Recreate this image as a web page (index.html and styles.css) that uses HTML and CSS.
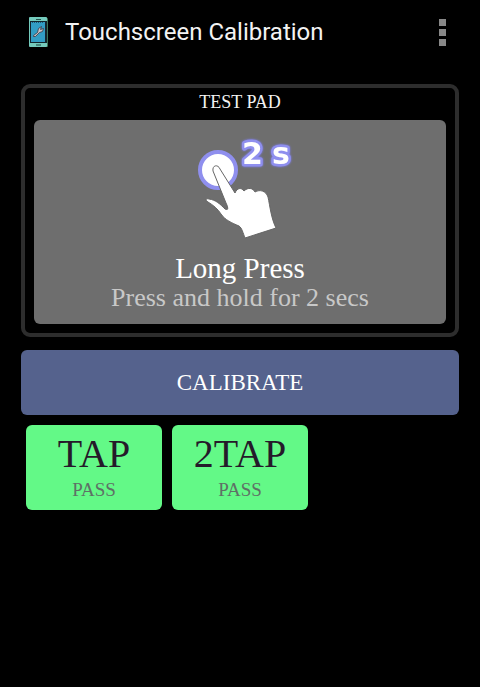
FILE: index.html
```html
<!DOCTYPE html>
<html lang="en">
<head>
    <meta charset="UTF-8">
    <meta name="viewport" content="width=device-width, initial-scale=1.0">
    <title>Touchscreen Calibration</title>
    <link rel="stylesheet" href="styles.css">
</head>
<body>
    <header class="app-bar">
        <svg class="app-icon" width="20" height="30" viewBox="0 0 20 30" aria-hidden="true">
            <rect x="2" y="1" width="18" height="29" rx="1" fill="#3f7458"/>
            <rect x="1" y="0" width="18" height="30" rx="1" fill="#74cabc"/>
            <rect x="2" y="4" width="17" height="22" fill="#14252d"/>
            <rect x="3" y="5" width="14" height="20" fill="#329dc4"/>
            <path d="M4 5.500h12" stroke="#1c566e" stroke-dasharray="1 1"/>
            <rect x="8" y="2" width="5" height="1" fill="#28544e"/>
            <rect x="8" y="27" width="5" height="2" fill="#47857b"/>
            <path d="M5.500 18.500l4-3 1-4 3-2-1 3 3-1-1 3-3 1-4 4h-2z" fill="#c9c2c6" stroke="#3a3540" stroke-width=".8"/>
        </svg>
        <h1>Touchscreen Calibration</h1>
        <button class="menu-button" type="button" aria-label="More options">
            <span></span>
            <span></span>
            <span></span>
        </button>
    </header>
    <main class="content">
        <section class="test-pad">
            <h2>TEST PAD</h2>
            <button class="pad" type="button">
                <svg class="gesture" width="130" height="115" viewBox="0 0 130 115" role="img" aria-label="Long press for 2 seconds">
                    <circle cx="43" cy="40" r="18" fill="#fff" stroke="#8f8fee" stroke-width="4"/>
                    <text class="gesture-time" x="67" y="34">2</text>
                    <text class="gesture-time" x="97" y="34">s</text>
                    <path d="M38 41C37 35 43 34 45 39L60 63C62 58 66 57 69 61C73 57 78 58 80 62C85 59 91 61 93 67C95 76 96 88 101 98L70 108C68 103 67 98 64 96C57 93 50 90 46 84C43 79 38 75 33 72C30 70 31 68 34 69C41 70 45 74 50 79C54 81 53 77 51 73Z" fill="#fff" stroke="#666" stroke-linejoin="round"/>
                </svg>
                <span class="pad-title">Long Press</span>
                <span class="pad-hint">Press and hold for 2 secs</span>
            </button>
        </section>
        <button class="calibrate" type="button">CALIBRATE</button>
        <div class="results">
            <div class="result">
                <span class="result-name">TAP</span>
                <span class="result-state">PASS</span>
            </div>
            <div class="result">
                <span class="result-name">2TAP</span>
                <span class="result-state">PASS</span>
            </div>
        </div>
    </main>
</body>
</html>
```
FILE: styles.css
```css
* {
    box-sizing: border-box;
}
body {
    margin: 0;
    background: #000;
    color: #f3f3f3;
    font-family: "Liberation Serif", serif;
}
h1, h2 {
    margin: 0;
    font-weight: normal;
}
button {
    border: none;
    cursor: pointer;
    font-family: inherit;
}
.app-bar {
    display: flex;
    align-items: center;
    height: 64px;
    padding: 0 28px;
}
.app-icon {
    flex: none;
    margin-right: 17px;
}
.app-bar h1 {
    flex: 1;
    font-family: Roboto, sans-serif;
    font-size: 24px;
    line-height: 32px;
}
.menu-button {
    display: flex;
    flex-direction: column;
    gap: 3px;
    padding: 6px;
    background: none;
}
.menu-button span {
    width: 7px;
    height: 7px;
    background: #888;
}
.content {
    padding: 20px 21px;
}
.test-pad {
    padding: 4px 9px 9px;
    border: 4px solid #2d2d2d;
    border-radius: 9px;
}
.test-pad h2 {
    margin-bottom: 8px;
    font-size: 18px;
    line-height: 20px;
    text-align: center;
}
.pad {
    display: flex;
    flex-direction: column;
    align-items: center;
    width: 100%;
    padding: 10px 10px 11px;
    border-radius: 6px;
    background: #6e6e6e;
}
.gesture {
    display: block;
    margin-bottom: 8px;
}
.gesture-time {
    fill: #fff;
    stroke: #8f8fee;
    stroke-width: 5px;
    stroke-linejoin: round;
    paint-order: stroke;
    font-family: "DejaVu Sans", sans-serif;
    font-size: 30px;
    font-weight: bold;
    filter: drop-shadow(0 0 1px #8080ff);
}
.pad-title {
    color: #fff;
    font-size: 29px;
    line-height: 30px;
}
.pad-hint {
    color: #c8c8c8;
    font-size: 26px;
    line-height: 30px;
}
.calibrate {
    display: block;
    width: 100%;
    margin-top: 13px;
    padding: 20px;
    border-radius: 6px;
    background: #55628d;
    color: #fff;
    font-size: 23px;
    line-height: 25px;
}
.results {
    display: grid;
    grid-template-columns: repeat(3, 1fr);
    gap: 10px;
    padding: 10px 5px;
}
.result {
    display: flex;
    flex-direction: column;
    align-items: center;
    padding: 8px 5px;
    border-radius: 6px;
    background: #63f987;
}
.result-name {
    color: #251a2a;
    font-size: 40px;
    line-height: 42px;
}
.result-state {
    margin-top: 3px;
    color: #5f7066;
    font-size: 19px;
    line-height: 24px;
}
```
